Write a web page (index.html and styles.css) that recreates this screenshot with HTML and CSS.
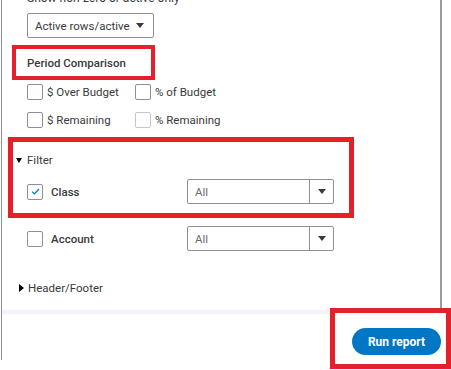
FILE: index.html
```html
<!DOCTYPE html>
<html lang="en">
  <head>
    <meta charset="UTF-8" />
    <meta name="viewport" content="width=device-width, initial-scale=1.0" />
    <title>Customize report</title>
    <link rel="stylesheet" href="styles.css">
  </head>
  <body>
    <div class="panel">
      <div class="scroll">
        <div class="cut">Show non-zero or active only</div>
        <div class="select short">
          <span class="value">Active rows/active columns</span>
          <span class="arrow"></span>
        </div>

        <div class="heading">Period Comparison</div>
        <div class="checks">
          <label class="check"><span class="box"></span>$ Over Budget</label>
          <label class="check"><span class="box"></span>% of Budget</label>
          <label class="check"><span class="box"></span>$ Remaining</label>
          <label class="check disabled"><span class="box"></span>% Remaining</label>
        </div>

        <div class="toggle"><span class="tri down"></span>Filter</div>
        <div class="filter first">
          <label class="check strong">
            <span class="box checked">
              <svg width="9" height="7" viewBox="0 0 9 7"><path d="M1 3.6 L3.4 5.8 L8 1" fill="none" stroke="#0077c5" stroke-width="1.2"/></svg>
            </span>Class
          </label>
          <div class="select split">
            <span class="value light">All</span>
            <span class="btn"><span class="arrow"></span></span>
          </div>
        </div>
        <div class="filter second">
          <label class="check strong"><span class="box"></span>Account</label>
          <div class="select split">
            <span class="value light">All</span>
            <span class="btn"><span class="arrow"></span></span>
          </div>
        </div>

        <div class="toggle footer-toggle"><span class="tri right"></span>Header/Footer</div>
      </div>
      <div class="footer">
        <button class="run">Run report</button>
      </div>
    </div>

    <div class="mark mark-period"></div>
    <div class="mark mark-filter"></div>
    <div class="mark mark-run"></div>
  </body>
</html>
```

FILE: styles.css
```css
body {
  margin: 0;
  background-color: #fff;
  font-family: Roboto, "Liberation Sans", sans-serif;
  font-size: 11.5px;
  color: #393a3d;
  overflow: hidden;
}
.panel {
  position: relative;
  margin-left: 1px;
  width: 440px;
  height: 360px;
  border-left: 1px solid #8d9096;
}
.scroll {
  height: 310px;
  padding-left: 25px;
  border-right: 2px solid #9a9ca1;
  box-sizing: border-box;
  overflow: hidden;
}
.cut {
  height: 13px;
  line-height: 16px;
  margin-top: -10px;
  padding-bottom: 10px;
  box-sizing: content-box;
  font-size: 12px;
}
.select {
  display: flex;
  align-items: center;
  height: 25px;
  border: 1px solid #8d9096;
  border-radius: 2px;
  box-sizing: border-box;
  background-color: #fff;
}
.select .value {
  flex: 1;
  padding-left: 7px;
  white-space: nowrap;
  overflow: hidden;
}
.select .value.light {
  color: #6b6c72;
}
.arrow {
  width: 0;
  height: 0;
  border-left: 4px solid transparent;
  border-right: 4px solid transparent;
  border-top: 5px solid #393a3d;
}
.select.short {
  width: 127px;
}
.select.short .value {
  margin-right: 4px;
}
.select.short .arrow {
  margin-right: 9px;
}
.select.split {
  width: 147px;
}
.select .btn {
  display: flex;
  align-items: center;
  justify-content: center;
  width: 23px;
  height: 100%;
  border-left: 1px solid #8d9096;
}
.heading {
  margin-top: 15px;
  line-height: 20px;
  font-weight: 500;
  font-size: 11.5px;
}
.checks {
  display: grid;
  grid-template-columns: 108px 120px;
  row-gap: 12px;
  margin-top: 11px;
}
.check {
  display: flex;
  align-items: center;
  height: 16px;
  gap: 4px;
}
.box {
  display: flex;
  align-items: center;
  justify-content: center;
  width: 16px;
  height: 16px;
  border: 1px solid #8d9096;
  border-radius: 2px;
  box-sizing: border-box;
}
.check.disabled .box {
  border-color: #c4c6cb;
}
.check.strong {
  gap: 8px;
  font-weight: 500;
  width: 160px;
}
.toggle {
  display: flex;
  align-items: center;
  height: 20px;
  margin-top: 22px;
  margin-left: -11px;
  gap: 5px;
}
.tri {
  display: inline-block;
  width: 0;
  height: 0;
}
.tri.down {
  border-left: 3.5px solid transparent;
  border-right: 3.5px solid transparent;
  border-top: 5px solid #000;
}
.tri.right {
  margin-left: 3px;
  margin-right: -1px;
  border-top: 4px solid transparent;
  border-bottom: 4px solid transparent;
  border-left: 5px solid #000;
}
.filter {
  display: flex;
  align-items: center;
  height: 25px;
}
.filter.first {
  margin-top: 9px;
}
.filter.second {
  margin-top: 22px;
}
.footer-toggle {
  margin-top: 27px;
}
.footer {
  display: flex;
  justify-content: flex-end;
  padding: 14px 1px 0 0;
  border-top: 4px solid #f3f4f7;
}
.run {
  position: relative;
  z-index: 2;
  width: 89px;
  height: 27px;
  border: none;
  border-radius: 14px;
  background-color: #0077c5;
  color: #fff;
  font-family: Roboto, "Liberation Sans", sans-serif;
  font-size: 12px;
  font-weight: bold;
  padding: 0;
}
.mark {
  position: absolute;
  border: 5px solid #e5202a;
  box-sizing: border-box;
}
.mark-period {
  left: 12px;
  top: 45px;
  width: 143px;
  height: 35px;
  border-width: 4px;
}
.mark-filter {
  left: 8px;
  top: 137px;
  width: 346px;
  height: 81px;
}
.mark-run {
  left: 330px;
  top: 308px;
  width: 121px;
  height: 61px;
  background-color: #fff;
  z-index: 1;
}
```
